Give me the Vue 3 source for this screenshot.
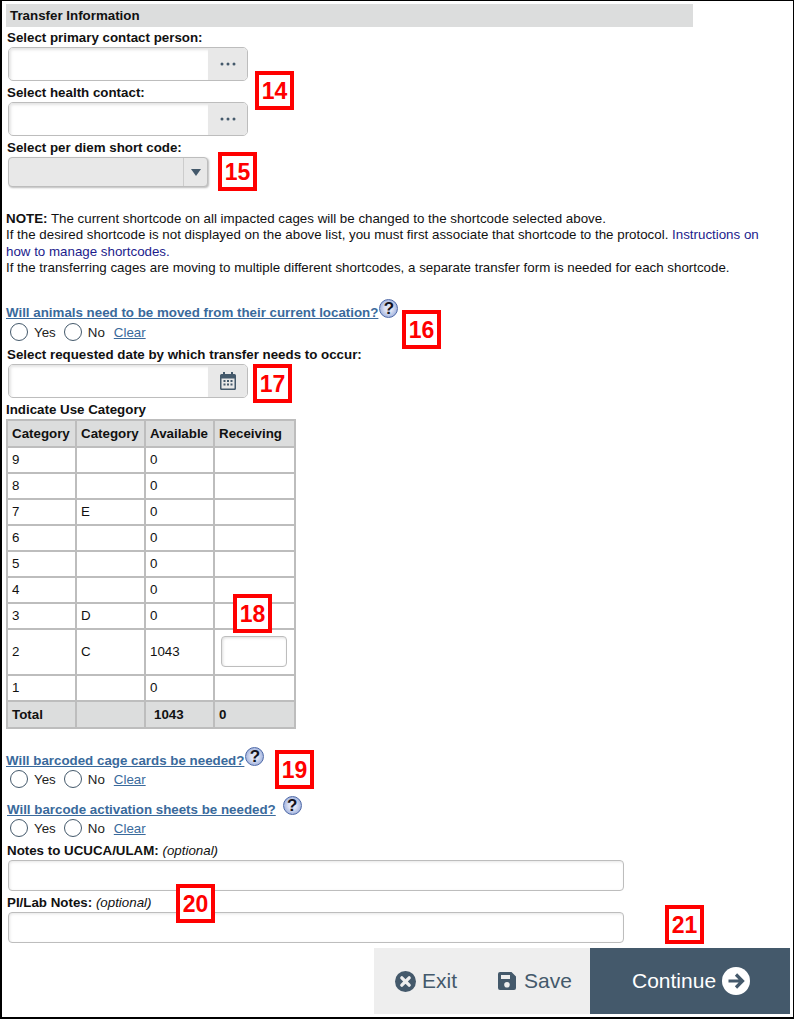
<script setup>
const rows = [
  { cat: '9', letter: '', avail: '0' },
  { cat: '8', letter: '', avail: '0' },
  { cat: '7', letter: 'E', avail: '0' },
  { cat: '6', letter: '', avail: '0' },
  { cat: '5', letter: '', avail: '0' },
  { cat: '4', letter: '', avail: '0' },
  { cat: '3', letter: 'D', avail: '0' },
  { cat: '2', letter: 'C', avail: '1043', input: true },
  { cat: '1', letter: '', avail: '0' }
]

// offsets are from the inside of the page border
const marks = [
  { n: 14, x: 253, y: 70 },
  { n: 15, x: 216, y: 151 },
  { n: 16, x: 400, y: 309 },
  { n: 17, x: 251, y: 363 },
  { n: 18, x: 231, y: 593 },
  { n: 19, x: 273, y: 749 },
  { n: 20, x: 174, y: 883 },
  { n: 21, x: 663, y: 904 }
]
</script>

<template>
  <div class="page">
    <div class="section-title">Transfer Information</div>

    <label class="field-label first">Select primary contact person:</label>
    <div class="picker">
      <div class="picker-input"></div>
      <div class="picker-btn">
        <svg width="16" height="4" viewBox="0 0 16 4"><circle cx="2" cy="2" r="1.5" /><circle cx="8" cy="2" r="1.5" /><circle cx="14" cy="2" r="1.5" /></svg>
      </div>
    </div>

    <label class="field-label">Select health contact:</label>
    <div class="picker">
      <div class="picker-input"></div>
      <div class="picker-btn">
        <svg width="16" height="4" viewBox="0 0 16 4"><circle cx="2" cy="2" r="1.5" /><circle cx="8" cy="2" r="1.5" /><circle cx="14" cy="2" r="1.5" /></svg>
      </div>
    </div>

    <label class="field-label">Select per diem short code:</label>
    <div class="dropdown">
      <div class="dropdown-arrow"><span class="arrow"></span></div>
    </div>

    <div class="note">
      <div><b>NOTE:</b> The current shortcode on all impacted cages will be changed to the shortcode selected above.</div>
      <div>If the desired shortcode is not displayed on the above list, you must first associate that shortcode to the protocol. <a class="note-link">Instructions on how to manage shortcodes.</a></div>
      <div>If the transferring cages are moving to multiple different shortcodes, a separate transfer form is needed for each shortcode.</div>
    </div>

    <div class="question q-move">
      <a class="question-link">Will animals need to be moved from their current location?</a>
      <span class="help">?</span>
    </div>
    <div class="radios roomy">
      <span class="radio"></span><span class="radio-text">Yes</span>
      <span class="radio"></span><span class="radio-text">No</span>
      <a class="clear">Clear</a>
    </div>

    <label class="field-label date-label">Select requested date by which transfer needs to occur:</label>
    <div class="picker">
      <div class="picker-input"></div>
      <div class="picker-btn">
        <svg width="16" height="18" viewBox="0 0 16 18">
          <path fill="#44596b" d="M3 0h2v2h6V0h2v2h1.500A1.500 1.500 0 0 1 16 3.500v13a1.500 1.500 0 0 1-1.500 1.500h-13A1.500 1.500 0 0 1 0 16.500v-13A1.500 1.500 0 0 1 1.500 2H3zM1.500 6.500V16a.5.5 0 0 0 .5.5h12a.5.5 0 0 0 .5-.5V6.500z" />
          <path fill="#44596b" d="M3.500 8h2v2h-2zM7 8h2v2H7zM10.500 8h2v2h-2zM3.500 11.500h2v2h-2zM7 11.500h2v2H7zM10.500 11.500h2v2h-2z" />
        </svg>
      </div>
    </div>

    <div class="table-title">Indicate Use Category</div>
    <table class="use-table">
      <thead>
        <tr>
          <th class="c1">Category</th>
          <th class="c2">Category</th>
          <th class="c3">Available</th>
          <th class="c4">Receiving</th>
        </tr>
      </thead>
      <tbody>
        <tr v-for="row in rows" :key="row.cat" :class="{ tall: row.input }">
          <td>{{ row.cat }}</td>
          <td>{{ row.letter }}</td>
          <td>{{ row.avail }}</td>
          <td><div v-if="row.input" class="count-input"></div></td>
        </tr>
      </tbody>
      <tfoot>
        <tr>
          <td>Total</td>
          <td></td>
          <td class="total-num">1043</td>
          <td>0</td>
        </tr>
      </tfoot>
    </table>

    <div class="question q-cards">
      <a class="question-link">Will barcoded cage cards be needed?</a>
      <span class="help">?</span>
    </div>
    <div class="radios">
      <span class="radio"></span><span class="radio-text">Yes</span>
      <span class="radio"></span><span class="radio-text">No</span>
      <a class="clear">Clear</a>
    </div>

    <div class="question q-sheets">
      <a class="question-link">Will barcode activation sheets be needed?</a>
      <span class="help spaced">?</span>
    </div>
    <div class="radios">
      <span class="radio"></span><span class="radio-text">Yes</span>
      <span class="radio"></span><span class="radio-text">No</span>
      <a class="clear">Clear</a>
    </div>

    <label class="field-label notes-label">Notes to UCUCA/ULAM: <i>(optional)</i></label>
    <div class="notes-input"></div>
    <label class="field-label notes-label second">PI/Lab Notes: <i>(optional)</i></label>
    <div class="notes-input"></div>

    <div class="actions">
      <div class="action-group">
        <span class="action">
          <svg width="21" height="21" viewBox="0 0 20 20">
            <circle cx="10" cy="10" r="10" fill="#44596b" />
            <path d="M6.500 6.500l7 7M13.500 6.500l-7 7" stroke="#eee" stroke-width="3.200" stroke-linecap="round" />
          </svg>
          Exit
        </span>
        <span class="action save">
          <svg width="18" height="18" viewBox="0 0 18 18">
            <path fill="#44596b" fill-rule="evenodd" d="M2 0h11.500L18 4.500V16a2 2 0 0 1-2 2H2a2 2 0 0 1-2-2V2a2 2 0 0 1 2-2zM3 3v4h9V3zM9 10a2.800 2.800 0 1 0 0 5.600A2.800 2.800 0 0 0 9 10z" />
          </svg>
          Save
        </span>
      </div>
      <div class="continue">
        Continue
        <svg width="28" height="28" viewBox="0 0 28 28">
          <circle cx="14" cy="14" r="14" fill="#fff" />
          <path d="M6.500 14h13M14 7.500l6.500 6.500-6.500 6.500" fill="none" stroke="#44596b" stroke-width="3.200" />
        </svg>
      </div>
    </div>

    <div v-for="m in marks" :key="m.n" class="mark" :style="{ left: m.x + 'px', top: m.y + 'px' }">{{ m.n }}</div>
  </div>
</template>

<style scoped>
.page {
  position: relative;
  box-sizing: border-box;
  width: 794px;
  height: 1019px;
  padding: 3px 0 0 4px;
  overflow: hidden;
  border: 1px solid #000;
  border-left-width: 2px;
  border-bottom-width: 2px;
  background: #fff;
  color: #111;
  font-family: "Liberation Sans", Arial, sans-serif;
  font-size: 13.330px;
}

.mark {
  position: absolute;
  box-sizing: border-box;
  width: 39px;
  height: 39px;
  border: 4px solid #f00;
  background: #fff;
  color: #f00;
  font-size: 23px;
  font-weight: bold;
  line-height: 33px;
  text-align: center;
}

.section-title {
  width: 687px;
  height: 23px;
  box-sizing: border-box;
  padding-left: 4px;
  background: #dcdddd;
  font-weight: bold;
  line-height: 23px;
}

.field-label {
  display: block;
  height: 17px;
  padding-left: 1px;
  font-weight: bold;
  line-height: 18px;
}

.first {
  margin-top: 2px;
}

.picker {
  display: flex;
  box-sizing: border-box;
  width: 240px;
  height: 34px;
  margin: 1px 0 3px 2px;
  overflow: hidden;
  border: 1px solid #bdbdbd;
  border-radius: 5px;
}

.picker-input {
  flex: 1;
  box-shadow: inset 2px 2px 3px #e4e4e4;
}

.picker-btn {
  display: flex;
  flex: 0 0 39px;
  align-items: center;
  justify-content: center;
  background: #e8e8e8;
}

.picker-btn circle {
  fill: #44596b;
}

.dropdown {
  display: flex;
  justify-content: flex-end;
  box-sizing: border-box;
  width: 200px;
  height: 30px;
  margin: 1px 0 0 2px;
  border: 1px solid #bdbdbd;
  border-radius: 4px;
  background: #e8e8e8;
  box-shadow: 1px 1px 2px #bbb;
}

.dropdown-arrow {
  display: flex;
  flex: 0 0 23px;
  align-items: center;
  justify-content: center;
  border-left: 1px solid #ccc;
}

.arrow {
  width: 0;
  height: 0;
  border-top: 7px solid #44596b;
  border-right: 5px solid transparent;
  border-left: 5px solid transparent;
}

.note {
  width: 760px;
  margin-top: 24px;
  line-height: 16.300px;
}

.note-link {
  color: #1c1c8c;
}

.question {
  display: flex;
  align-items: flex-start;
  font-weight: bold;
}

.q-move {
  margin-top: 23px;
}

.q-cards {
  margin-top: 18px;
}

.q-sheets {
  margin-top: 7px;
  padding-left: 1px;
}

.question-link {
  margin-top: 6px;
  color: #3a6a9c;
  line-height: 15px;
  text-decoration: underline;
}

.help {
  box-sizing: border-box;
  width: 19px;
  height: 19px;
  margin-left: 1px;
  border: 1px solid #4f6aa8;
  border-radius: 50%;
  background: radial-gradient(circle at 50% 50%, #dfe4f5 30%, #7f97d0 100%);
  color: #14141c;
  font-size: 17px;
  font-weight: bold;
  line-height: 17px;
  text-align: center;
}

.spaced {
  margin-left: 7px;
}

.radios {
  display: flex;
  align-items: center;
  height: 20px;
  margin-top: 1px;
  padding-left: 4px;
}

.roomy {
  margin-top: 2px;
}

.radio {
  box-sizing: border-box;
  width: 18px;
  height: 18px;
  border: 1.500px solid #44596b;
  border-radius: 50%;
  background: #fff;
}

.radio-text {
  margin: 0 8px 0 6px;
  color: #222;
}

.clear {
  margin-left: 1px;
  color: #3a6a9c;
  text-decoration: underline;
}

.date-label {
  margin-top: 4px;
}

.date-label + .picker {
  margin-top: 1px;
}

.table-title {
  margin-top: 2px;
  height: 18px;
  font-weight: bold;
  line-height: 18px;
}

.use-table {
  box-sizing: border-box;
  width: 290px;
  border-collapse: collapse;
  border: 2px solid #bdbdbd;
  table-layout: fixed;
}

.use-table th,
.use-table td {
  box-sizing: border-box;
  padding: 0 4px;
  border: 2px solid #bdbdbd;
  text-align: left;
}

.use-table th {
  height: 27px;
  background: #dcdddd;
  font-weight: bold;
}

.use-table td {
  height: 26px;
  padding-bottom: 2px;
}

.c1,
.c2,
.c3 {
  width: 69px;
}

.tall td {
  height: 46px;
}

.count-input {
  box-sizing: border-box;
  width: 66px;
  height: 31px;
  margin-left: 2px;
  border: 1px solid #bdbdbd;
  border-radius: 4px;
  box-shadow: inset 1px 1px 3px #ddd;
}

.use-table tfoot td {
  height: 27px;
  padding-bottom: 0;
  background: #dcdddd;
  font-weight: bold;
}

.use-table .total-num {
  padding-left: 8px;
}

.notes-label {
  margin-top: 4px;
}

.notes-label i {
  font-weight: normal;
}

.notes-label.second {
  margin-top: 3px;
}

.notes-input {
  box-sizing: border-box;
  width: 616px;
  height: 31px;
  margin: 1px 0 0 2px;
  border: 1px solid #bdbdbd;
  border-radius: 4px;
  box-shadow: inset 1px 1px 3px #e6e6e6;
}

.actions {
  display: flex;
  height: 66px;
  margin: 5px 0 0 368px;
}

.action-group {
  display: flex;
  box-sizing: border-box;
  width: 216px;
  align-items: center;
  padding-left: 21px;
  background: #eee;
}

.action {
  display: flex;
  align-items: center;
  gap: 6px;
  color: #44596b;
  font-size: 21px;
}

.save {
  gap: 8px;
  margin-left: 41px;
}

.continue {
  display: flex;
  flex: 0 0 200px;
  box-sizing: border-box;
  align-items: center;
  gap: 6px;
  padding-left: 42px;
  background: #44596b;
  color: #fff;
  font-size: 21px;
}
</style>

<style>
body {
  margin: 0;
}
</style>
